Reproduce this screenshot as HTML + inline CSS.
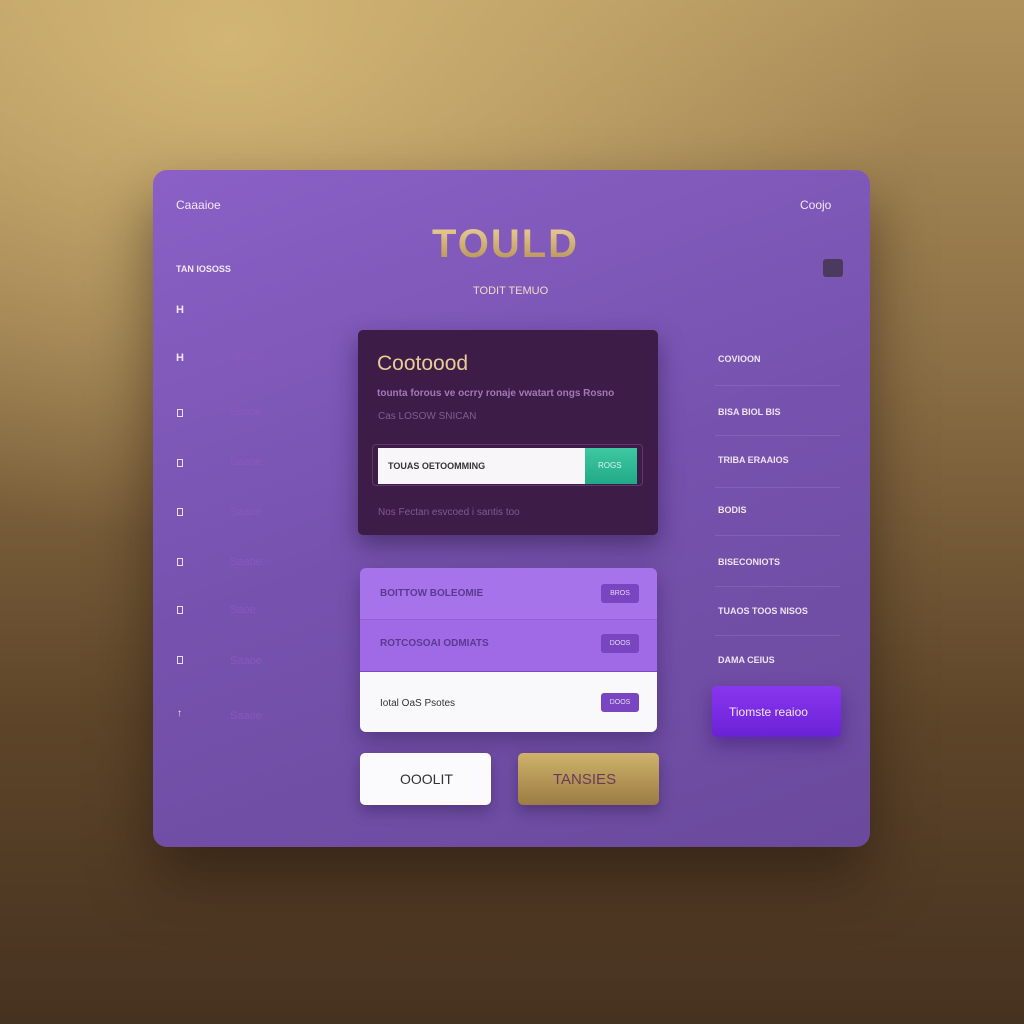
<!DOCTYPE html>
<html><head><style>
*{margin:0;padding:0;box-sizing:border-box}
body{width:1024px;height:1024px;overflow:hidden;font-family:"Liberation Sans",sans-serif;
background:radial-gradient(ellipse 700px 500px at 230px 40px,rgba(214,186,120,.9) 0%,rgba(214,186,120,0) 100%),linear-gradient(180deg,#b0935c 0%,#8c6f45 35%,#5e4529 70%,#463220 100%);position:relative}
.abs{position:absolute}
.panel{left:153px;top:170px;width:717px;height:677px;border-radius:14px;
background:linear-gradient(160deg,#8a60c6 0%,#7652ae 50%,#6a4a9c 100%);box-shadow:0 30px 60px rgba(30,15,10,.5)}
.t{position:absolute;white-space:nowrap}
.w{color:#f1e8f6}
.icon{position:absolute;left:177px;width:6px;height:8px;border:1.5px solid #e8dff0}
.lbl{position:absolute;left:230px;font-size:11px;color:#9058c0;opacity:.8}
.rl{position:absolute;left:718px;font-size:9px;color:#eee4f4;font-weight:bold}
.rline{position:absolute;left:715px;width:125px;height:1px;background:rgba(255,255,255,.1)}
.sb{position:absolute;left:601px;width:38px;height:19px;border-radius:3px;background:#7a45c0;color:#e5d7f6;font-size:7px;text-align:center;line-height:19px}
.rowt{position:absolute;left:380px;font-size:10px;font-weight:bold}
</style></head><body>
<div class="abs panel"></div>
<div class="t w" style="left:176px;top:198px;font-size:12px">Caaaioe</div>
<div class="t w" style="left:800px;top:198px;font-size:12px">Coojo</div>
<div class="t" style="left:432px;top:222px;font-size:40px;font-weight:bold;letter-spacing:2px;background:linear-gradient(#f0d49a,#b08a50);-webkit-background-clip:text;color:transparent">TOULD</div>
<div class="t" style="left:473px;top:285px;font-size:11px;color:#f0dcc8">TODIT TEMUO</div>
<div class="t w" style="left:176px;top:264px;font-size:9px;font-weight:bold">TAN IOSOSS</div>
<div class="abs" style="left:823px;top:259px;width:20px;height:18px;border-radius:3px;background:#4c3a5e"></div>
<div class="t w" style="left:176px;top:304px;font-size:11px;font-weight:bold">H</div>
<div class="t w" style="left:176px;top:352px;font-size:11px;font-weight:bold">H</div>
<div class="lbl" style="top:351px">Soaoio</div>
<div class="icon" style="top:409px"></div><div class="lbl" style="top:406px">Saaoe</div>
<div class="icon" style="top:459px"></div><div class="lbl" style="top:456px">Saaoe</div>
<div class="icon" style="top:508px"></div><div class="lbl" style="top:506px">Saaoe</div>
<div class="icon" style="top:558px"></div><div class="lbl" style="top:556px">Saaoe</div>
<div class="icon" style="top:606px"></div><div class="lbl" style="top:604px">Saoe</div>
<div class="icon" style="top:656px"></div><div class="lbl" style="top:655px">Saaoe</div>
<div class="t w" style="left:177px;top:708px;font-size:10px">↑</div>
<div class="lbl" style="top:710px">Saaoe</div>
<div class="abs" style="left:358px;top:330px;width:300px;height:205px;border-radius:5px;background:#3d1d47;box-shadow:0 10px 24px rgba(40,20,60,.5)"></div>
<div class="t" style="left:377px;top:352px;font-size:21px;color:#e8cc96">Cootoood</div>
<div class="t" style="left:377px;top:388px;font-size:10px;color:#a477b8;font-weight:bold">tounta forous ve ocrry ronaje vwatart ongs Rosno</div>
<div class="t" style="left:378px;top:411px;font-size:10px;color:#7e5e90">Cas LOSOW SNICAN</div>
<div class="abs" style="left:372px;top:444px;width:271px;height:42px;border-radius:4px;border:1px solid #5e3a68"></div>
<div class="abs" style="left:378px;top:448px;width:208px;height:36px;background:#f8f6f8"></div>
<div class="t" style="left:388px;top:461px;font-size:9px;color:#333;font-weight:bold">TOUAS OETOOMMING</div>
<div class="abs" style="left:585px;top:448px;width:52px;height:36px;background:linear-gradient(#3ec8a0,#22aa88)"></div>
<div class="t" style="left:598px;top:461px;font-size:8px;color:#d8f4ea">ROGS</div>
<div class="t" style="left:378px;top:507px;font-size:10px;color:#7e5a8c">Nos Fectan esvcoed i santis too</div>
<div class="abs" style="left:360px;top:568px;width:297px;height:164px;border-radius:6px;overflow:hidden;box-shadow:0 8px 20px rgba(40,20,70,.4)">
<div style="height:52px;background:#a673ea;border-bottom:1px solid #9260d4"></div>
<div style="height:52px;background:#a06ae6;border-bottom:1px solid #7a48c0"></div>
<div style="height:60px;background:#f9f8fb"></div>
</div>
<div class="rowt" style="top:588px;color:#5a3a90">BOITTOW BOLEOMIE</div>
<div class="rowt" style="top:638px;color:#5a3a90">ROTCOSOAI ODMIATS</div>
<div class="rowt" style="top:698px;color:#333;font-weight:normal">Iotal OaS Psotes</div>
<div class="sb" style="top:584px">BROS</div>
<div class="sb" style="top:634px">DOOS</div>
<div class="sb" style="top:693px">DOOS</div>
<div class="abs" style="left:360px;top:753px;width:131px;height:52px;border-radius:5px;background:#fbfafc;box-shadow:0 6px 14px rgba(30,15,60,.35)"></div>
<div class="t" style="left:400px;top:771px;font-size:14px;color:#333">OOOLIT</div>
<div class="abs" style="left:518px;top:753px;width:141px;height:52px;border-radius:5px;background:linear-gradient(#d0b26c,#9c7c42);box-shadow:0 6px 14px rgba(30,15,60,.35)"></div>
<div class="t" style="left:553px;top:771px;font-size:15px;color:#6a3a5a">TANSIES</div>
<div class="rl" style="top:354px">COVIOON</div><div class="rline" style="top:385px"></div>
<div class="rl" style="top:407px">BISA BIOL BIS</div><div class="rline" style="top:435px"></div>
<div class="rl" style="top:455px">TRIBA ERAAIOS</div><div class="rline" style="top:487px"></div>
<div class="rl" style="top:505px">BODIS</div><div class="rline" style="top:535px"></div>
<div class="rl" style="top:557px">BISECONIOTS</div><div class="rline" style="top:586px"></div>
<div class="rl" style="top:606px">TUAOS TOOS NISOS</div><div class="rline" style="top:635px"></div>
<div class="rl" style="top:655px">DAMA CEIUS</div>
<div class="abs" style="left:712px;top:686px;width:129px;height:51px;border-radius:5px;background:linear-gradient(#8a36ee,#6a22d6);box-shadow:0 8px 18px rgba(60,20,120,.5)"></div>
<div class="t" style="left:729px;top:705px;font-size:12px;color:#f0e6fa">Tiomste reaioo</div>
</body></html>
